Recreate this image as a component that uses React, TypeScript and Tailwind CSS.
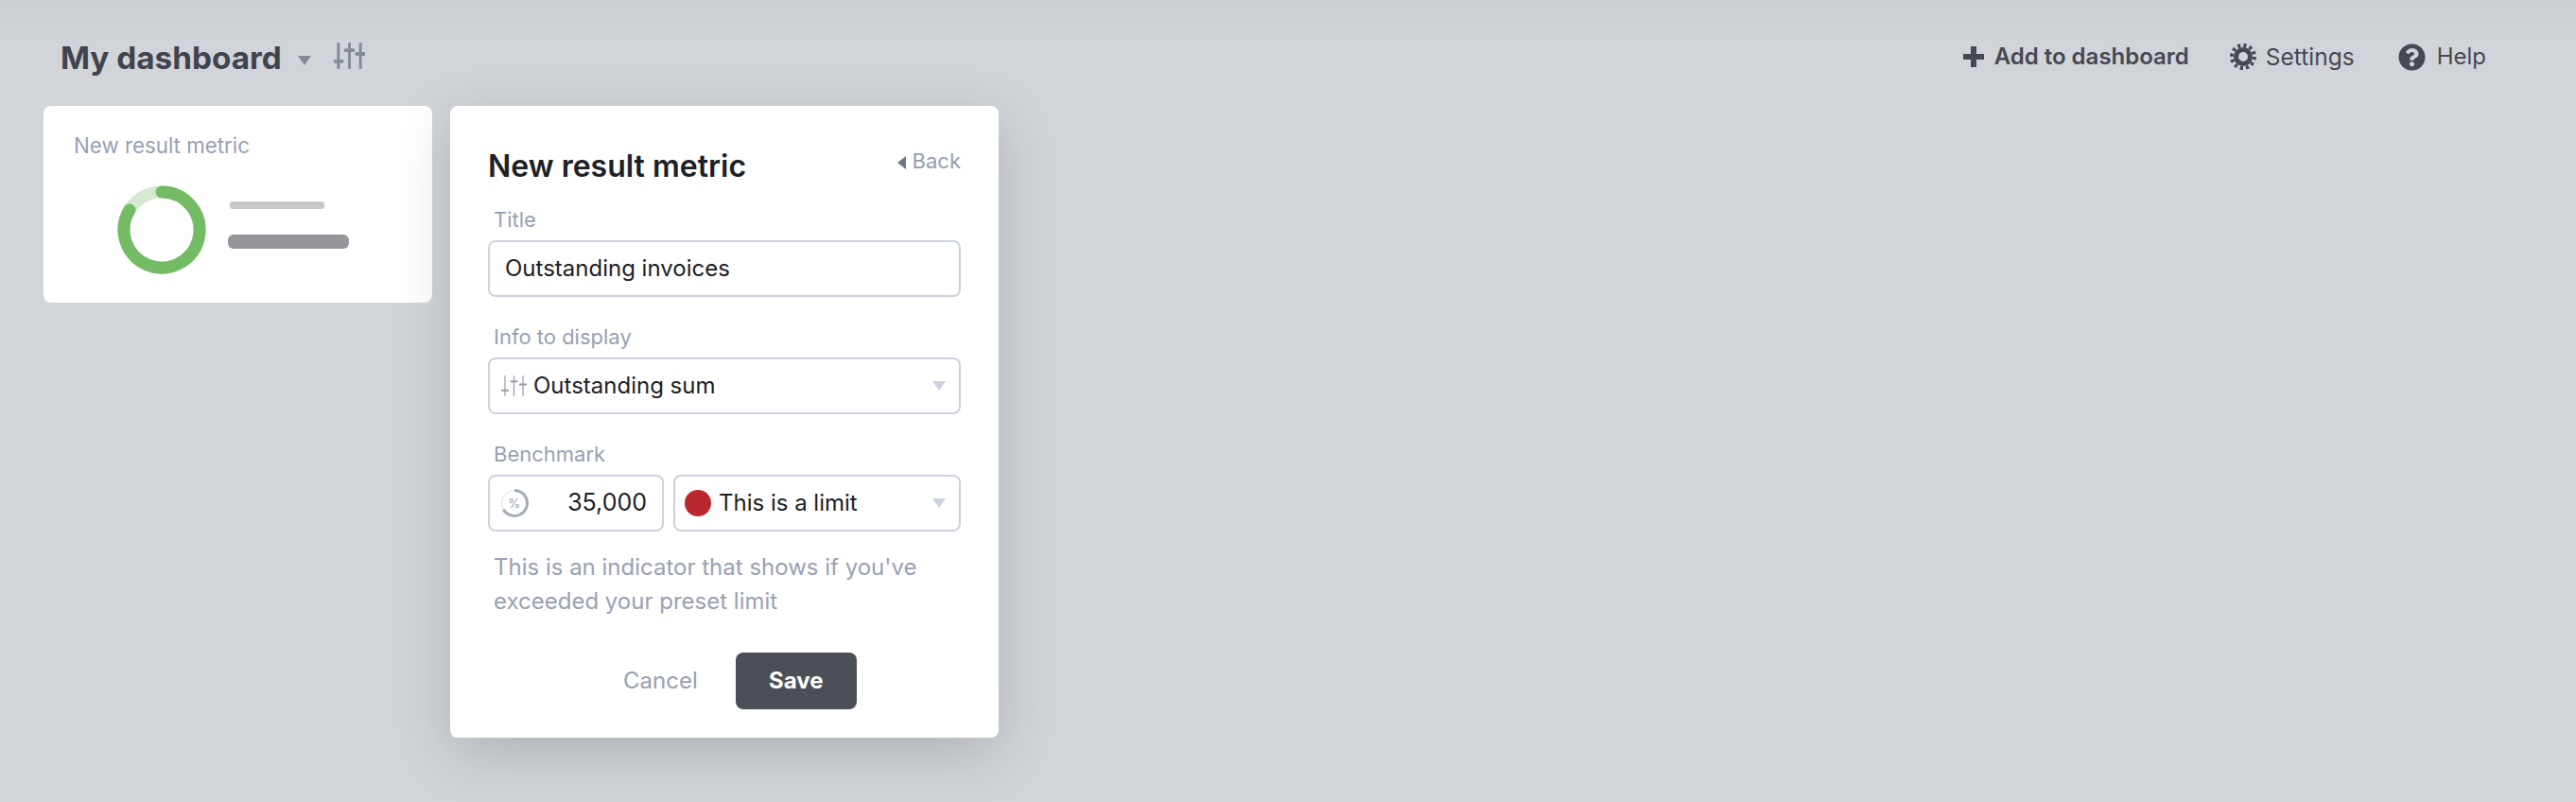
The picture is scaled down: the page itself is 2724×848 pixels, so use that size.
import { FaQuestionCircle } from "react-icons/fa";

function Caret({ className }: { className: string }) {
  return (
    <svg viewBox="0 0 14 10" className={className}>
      <path d="M0 0h14L7 10z" fill="currentColor" />
    </svg>
  );
}

function Sliders({ className, width = 2 }: { className: string; width?: number }) {
  return (
    <svg viewBox="0 0 34 28" className={className} fill="none" stroke="currentColor" strokeLinecap="round">
      <path d="M5 1v26M17 1v26M29 1v26" strokeWidth={width} />
      <path d="M1 20h8M13 8h8M25 12h8" strokeWidth={width + 1} />
    </svg>
  );
}

function Gear({ className }: { className: string }) {
  return (
    <svg viewBox="0 0 28 28" className={className}>
      <circle cx="14" cy="14" r="12" fill="none" stroke="currentColor" strokeWidth="4" strokeDasharray="3.2 3.08" />
      <circle cx="14" cy="14" r="7.5" fill="none" stroke="currentColor" strokeWidth="5" />
    </svg>
  );
}

function Gauge({ className }: { className: string }) {
  return (
    <svg viewBox="0 0 30 30" className={className} fill="none">
      <circle cx="15" cy="15" r="13.5" stroke="#dfe2e8" strokeWidth="1" />
      <path d="M15 1.5A13.5 13.5 0 1 1 3.3 21.7" stroke="#a5adbb" strokeWidth="3" />
      <text x="15" y="19.5" textAnchor="middle" fontSize="13" fill="#9aa3b2" fontFamily="Inter, sans-serif">
        %
      </text>
    </svg>
  );
}

function Donut() {
  return (
    <svg viewBox="0 0 94 94" className="w-[94px] h-[94px]" fill="none" strokeWidth="13">
      <circle cx="47" cy="47" r="40" stroke="#d6e9d2" />
      <path d="M47 7A40 40 0 1 1 13 26" stroke="#74bb66" strokeLinecap="round" />
    </svg>
  );
}

function Label({ children }: { children: string }) {
  return <div className="h-[28px] leading-[28px] pl-[6px] mb-[8px] text-[22px] text-[#98a1b2]">{children}</div>;
}

export default function App() {
  return (
    <div className="w-[2724px] h-[848px] overflow-hidden bg-[linear-gradient(to_bottom,#cbced3,#d1d4d9_40px)] [font-family:Inter,sans-serif]">
      <header className="h-[112px] flex justify-between pl-[64px] pr-[95px]">
        <div className="flex items-center pt-[12px]">
          <h1 className="text-[33.3px] font-bold text-[#3f444e]">My dashboard</h1>
          <Caret className="w-[14px] h-[10px] ml-[17px] mt-[4px] text-[#838b98]" />
          <Sliders className="w-[33px] h-[28px] ml-[24px] -mt-[6px] text-[#828b97]" width={3} />
        </div>
        <div className="flex items-center pt-[8px] text-[24px] text-[#454952]">
          <svg viewBox="0 0 22 22" className="w-[22px] h-[22px]">
            <path d="M8 0h6v8h8v6h-8v8H8v-8H0V8h8z" fill="currentColor" />
          </svg>
          <span className="ml-[11px] font-semibold">Add to dashboard</span>
          <Gear className="w-[28px] h-[28px] ml-[43px]" />
          <span className="ml-[10px] text-[24.5px]">Settings</span>
          <FaQuestionCircle className="w-[29px] h-[29px] ml-[46px]" />
          <span className="ml-[12px]">Help</span>
        </div>
      </header>
      <main className="flex items-start gap-[19px] pl-[46px]">
        <section className="w-[411px] h-[208px] bg-white rounded-[8px] pt-[28px] pl-[32px]">
          <div className="text-[22.3px] leading-[28px] text-[#98a1b2]">New result metric</div>
          <div className="flex items-center mt-[28px] pl-[46px]">
            <Donut />
            <div className="ml-[23px] -mt-[10px]">
              <div className="w-[100px] h-[8px] rounded-[3px] bg-[#c8c9cb] ml-[2px]" />
              <div className="w-[128px] h-[15px] rounded-[6px] bg-[#959699] mt-[27px]" />
            </div>
          </div>
        </section>
        <section className="relative w-[580px] h-[668px] bg-white rounded-[8px] px-[40px] pt-[40px] shadow-[0_16px_60px_rgba(0,0,0,0.16)]">
          <div className="flex justify-between items-center mb-[18px]">
            <h2 className="text-[32px] leading-[48px] font-semibold text-[#1d2025]">New result metric</h2>
            <div className="flex items-center pb-[12px] text-[22px] text-[#949dae]">
              <svg viewBox="0 0 9 14" className="w-[9px] h-[14px] mr-[7px] mt-[3px]">
                <path d="M9 0v14L0 7z" fill="#6f7785" />
              </svg>
              Back
            </div>
          </div>
          <Label>Title</Label>
          <div className="h-[60px] flex items-center border-2 border-[#cdd2df] rounded-[8px] pl-[16px] text-[24px] text-[#1d2025]">
            Outstanding invoices
          </div>
          <div className="mt-[28px]">
            <Label>Info to display</Label>
          </div>
          <div className="h-[60px] flex items-center border-2 border-[#cdd2df] rounded-[8px] pl-[12px] pr-[14px] text-[24px] text-[#1d2025]">
            <Sliders className="w-[27px] h-[26px] text-[#959daa]" width={1.5} />
            <span className="ml-[7px] flex-1">Outstanding sum</span>
            <Caret className="w-[14px] h-[10px] text-[#ccd1dd]" />
          </div>
          <div className="mt-[28px]">
            <Label>Benchmark</Label>
          </div>
          <div className="flex gap-[10px]">
            <div className="w-[186px] h-[60px] flex items-center justify-between border-2 border-[#cdd2df] rounded-[8px] pl-[11px] pr-[16px] text-[24px] text-[#1d2025]">
              <Gauge className="w-[30px] h-[30px]" />
              <span className="text-[25px]">35,000</span>
            </div>
            <div className="flex-1 h-[60px] flex items-center border-2 border-[#cdd2df] rounded-[8px] pl-[10px] pr-[14px] text-[24px] text-[#1d2025]">
              <span className="w-[28px] h-[28px] rounded-full bg-[#b9272f]" />
              <span className="ml-[8px] flex-1">This is a limit</span>
              <Caret className="w-[14px] h-[10px] text-[#ccd1dd]" />
            </div>
          </div>
          <p className="mt-[20px] pl-[6px] text-[24px] leading-[36px] text-[#98a1b2]">
            This is an indicator that shows if you've
            <br />
            exceeded your preset limit
          </p>
          <div className="flex items-center mt-[36px] pl-[143px]">
            <span className="text-[24px] text-[#98a1b2]">Cancel</span>
            <button className="ml-[40px] w-[128px] h-[60px] rounded-[8px] bg-[#4b4f58] text-white text-[24px] font-bold">
              Save
            </button>
          </div>
        </section>
      </main>
    </div>
  );
}
